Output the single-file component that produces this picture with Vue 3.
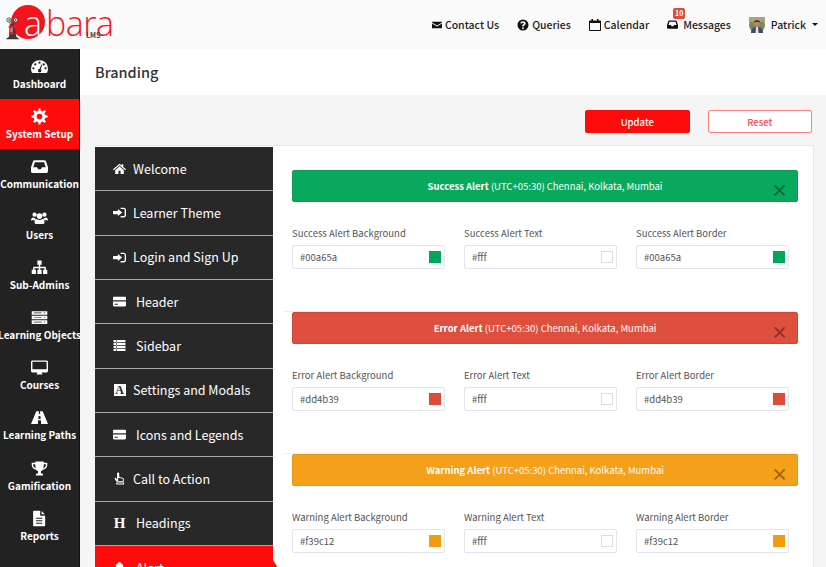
<script setup>
import { ref } from 'vue'

const gear = (() => {
  let d = ''
  const teeth = 8
  for (let i = 0; i < teeth; i++) {
    const a = (i / teeth) * Math.PI * 2
    const pts = [[-0.2, 8.4], [-0.13, 11.5], [0.13, 11.5], [0.2, 8.4]]
    pts.forEach((p, j) => {
      const x = 12 + p[1] * Math.cos(a + p[0])
      const y = 12 + p[1] * Math.sin(a + p[0])
      d += (i === 0 && j === 0 ? 'M' : 'L') + x.toFixed(2) + ' ' + y.toFixed(2)
    })
  }
  return d + 'zM12 8a4 4 0 1 0 0 8a4 4 0 0 0 0-8z'
})()

const icons = {
  gauge: 'M12 3A12 12 0 0 0 0 15c0 2.2.6 4.2 1.7 6h20.6c1.100-1.800 1.700-3.800 1.700-6A12 12 0 0 0 12 3zM12 5a1.600 1.600 0 1 1 0 3.200a1.600 1.600 0 0 1 0-3.200zM6 7.500a1.600 1.600 0 1 1 0 3.200a1.600 1.600 0 0 1 0-3.200zM18 7.500a1.600 1.600 0 1 1 0 3.200a1.600 1.600 0 0 1 0-3.200zM3.500 13a1.600 1.600 0 1 1 0 3.200a1.600 1.600 0 0 1 0-3.200zM20.500 13a1.600 1.600 0 1 1 0 3.200a1.600 1.600 0 0 1 0-3.200zM14.500 9l1.300.4l-2 6.400a2.500 2.500 0 1 1-1.500-.5z',
  gear,
  inbox: 'M5 3h14c1 0 1.700.5 2 1.400L24 13v6c0 1.200-.9 2-2 2H2c-1.100 0-2-.8-2-2v-6L3 4.400C3.300 3.500 4 3 5 3zM5.500 6L3.200 13h5.300l1.500 3h4l1.500-3h5.300L18.500 6z',
  users: 'M5 5a3 3 0 1 1 0 6a3 3 0 0 1 0-6zM19 5a3 3 0 1 1 0 6a3 3 0 0 1 0-6zM12 6a4 4 0 1 1 0 8a4 4 0 0 1 0-8zM0 17c0-3 1-5 3-5c.8.800 2.200 1.200 3.500.800c-.5 1-.8 2.200-.8 3.200H2c-1 0-2 .2-2 1zM24 17c0-3-1-5-3-5c-.8.800-2.200 1.200-3.500.800c.5 1 .8 2.200.8 3.200H22c1 0 2 .2 2 1zM7 21c-1.300 0-2-.8-2-2c0-3 1-5 3-5c1 1 2.500 1.500 4 1.500s3-.5 4-1.500c2 0 3 2 3 5c0 1.200-.7 2-2 2z',
  sitemap: 'M9 2h6v6h-2v3h7c.6 0 1 .4 1 1v3h2v6h-6v-6h2v-2h-6v2h2v6H9v-6h2v-2H5v2h2v6H1v-6h2v-3c0-.6.4-1 1-1h7V8H9z',
  server: 'M1 3h22v5H1zM1 9.500h22v5H1zM1 16h22v5H1zM4 5v1h11V5zM4 11.500v1h11v-1zM4 18v1h11v-1zM18 5v1h2V5zM18 11.500v1h2v-1zM18 18v1h2v-1z',
  desktop: 'M2 2h20c1.100 0 2 .9 2 2v13c0 1.100-.9 2-2 2h-7c0 1 .5 1.500 1 2v1H8v-1c.5-.5 1-1 1-2H2c-1.100 0-2-.9-2-2V4c0-1.100.9-2 2-2zM2 4v10.500h20V4z',
  road: 'M7.500 3h3.800l-.3 4h2l-.3-4h3.800L24 21h-9.700l-.3-5h-4l-.3 5H0zM10.700 10l-.3 4h3.200l-.3-4z',
  trophy: 'M6 2h12v2h5v3c0 3.500-3 6.500-6.300 6.800c-.8 1-1.700 1.700-2.700 2.200v2c0 1 1 1.500 3 1.500V22H7v-2.500c2 0 3-.5 3-1.500v-2c-1-.5-1.900-1.200-2.700-2.200C4 13.500 1 10.500 1 7V4h5zM3 6v1c0 2 1.500 3.800 3.700 4.500C6.200 10 6 8 6 6zM21 6h-3c0 2-.2 4-.7 5.500C19.500 10.800 21 9 21 7z',
  file: 'M4 1h9v7h7v14c0 .6-.4 1-1 1H4c-.6 0-1-.4-1-1V2c0-.6.4-1 1-1zM15 1.500L19.500 6H15zM7 11v1.500h9V11zM7 14.500V16h9v-1.500zM7 18v1.500h9V18z',
  home: 'M12 3l4 3.500V4h3v5.200L24 13.500l-1.400 1.600L12 6L1.400 15.100L0 13.500zM12 8l8 7v7h-6v-6h-4v6H4v-7z',
  signin: 'M14 3h6c2 0 4 2 4 4v10c0 2-2 4-4 4h-6v-2.500h6c.8 0 1.500-.7 1.500-1.500V7c0-.8-.7-1.500-1.500-1.500h-6zM9 5.500l8 6.500l-8 6.500V15H1c-.6 0-1-.4-1-1v-4c0-.6.4-1 1-1h8z',
  card: 'M2 3h20c1.100 0 2 .9 2 2v14c0 1.100-.9 2-2 2H2c-1.100 0-2-.9-2-2V5c0-1.100.9-2 2-2zM0 9.500V12h24V9.500zM3 16v2h6v-2z',
  list: 'M1 2h22v4H1zM1 7.500h22v4H1zM1 13h22v4H1zM1 18.500h22v3.500H1zM5.500 2v20h1.200V2z',
  hand: 'M9.500 1c1.200 0 2 .9 2 2v6l6 1.500c1.500.4 2.500 1.500 2.500 3V18H6.500L3 12.500c-.7-1 .8-2.800 2-1.500l2.500 2.500V3c0-1.100.8-2 2-2zM9.500 3v13.500h8.700v-3c0-.7-.5-1.200-1.200-1.400L9.500 10.500zM6 19.500h14.500V23H6zM8 20.800v1h10.500v-1z',
  bell: 'M12 0c1.500 0 2.500 1 2.500 2.500C17.500 3.500 19 6 19 9c0 5 2 7 3 8v2H2v-2c1-1 3-3 3-8c0-3 1.500-5.500 4.500-6.500C9.500 1 10.500 0 12 0z',
  envelope: 'M1 4h22c.6 0 1 .4 1 1v1L12 13L0 6V5c0-.6.4-1 1-1zM0 8.500l12 7l12-7V19c0 .6-.4 1-1 1H1c-.6 0-1-.4-1-1z',
  question: 'M12 1a11 11 0 1 1 0 22a11 11 0 0 1 0-22zM10.300 17v3h3.400v-3zM12 4.500c-3 0-4.800 1.500-5.300 3.800l3 .8c.3-1 1-1.600 2.100-1.600c1 0 1.800.5 1.800 1.400c0 .8-.5 1.200-1.500 1.900c-1.300.9-1.800 1.800-1.800 3.200v1h3.400v-.7c0-.6.300-1 1.300-1.700c1.500-1 2.300-2.100 2.300-3.800c0-2.600-2.500-4.300-5.300-4.300z',
  calendar: 'M5 0h3v3h8V0h3v3h3c1.100 0 2 .9 2 2v17c0 1.100-.9 2-2 2H2c-1.100 0-2-.9-2-2V5c0-1.100.9-2 2-2h3zM2 8v14h20V8z'
}

const topLinks = [
  { label: 'Contact Us', icon: 'envelope', size: 10 },
  { label: 'Queries', icon: 'question', size: 12 },
  { label: 'Calendar', icon: 'calendar', size: 12 }
]

const sideItems = [
  { label: 'Dashboard', icon: 'gauge' },
  { label: 'System Setup', icon: 'gear', active: true },
  { label: 'Communication', icon: 'inbox' },
  { label: 'Users', icon: 'users' },
  { label: 'Sub-Admins', icon: 'sitemap' },
  { label: 'Learning Objects', icon: 'server' },
  { label: 'Courses', icon: 'desktop' },
  { label: 'Learning Paths', icon: 'road' },
  { label: 'Gamification', icon: 'trophy' },
  { label: 'Reports', icon: 'file' }
]

const menuItems = [
  { label: 'Welcome', icon: 'home' },
  { label: 'Learner Theme', icon: 'signin' },
  { label: 'Login and Sign Up', icon: 'signin' },
  { label: 'Header', icon: 'card', wide: true },
  { label: 'Sidebar', icon: 'list', wide: true },
  { label: 'Settings and Modals', letter: 'A' },
  { label: 'Icons and Legends', icon: 'card', wide: true },
  { label: 'Call to Action', icon: 'hand' },
  { label: 'Headings', letter: 'H', wide: true },
  { label: 'Alert', icon: 'bell', wide: true, active: true }
]

const alerts = ref([
  { name: 'Success', cls: 'success', bg: '#00a65a' },
  { name: 'Error', cls: 'error', bg: '#dd4b39' },
  { name: 'Warning', cls: 'warning', bg: '#f39c12' }
])
</script>

<template>
  <div class="page">
    <header class="topbar">
      <div class="logo">
        <span class="logo-disc"></span>
        <svg class="snail" viewBox="0 0 30 40">
          <path d="M8 11 6 5M13 11l3-6" stroke="#333" stroke-width="1.200" fill="none" />
          <circle cx="6" cy="5" r="3.200" fill="#fff" stroke="#333" stroke-width="1.200" />
          <circle cx="16" cy="5" r="3.200" fill="#fff" stroke="#333" stroke-width="1.200" />
          <circle cx="6" cy="5" r="1.200" fill="#222" />
          <circle cx="16" cy="5" r="1.200" fill="#222" />
          <path d="M7 12c1-2 6-2 7 0l3 18 5 4H1l5-4z" fill="#3a3a3a" />
          <path d="M6 14l9-1 1 3-5 1 2 9-5 1-1-10-2-1z" fill="#e9232b" />
          <path d="M8 19l4-1M8 22l4-1" stroke="#fff" stroke-width="1" />
        </svg>
        <span class="logo-a">a</span>
        <span class="logo-bara">bara</span>
        <span class="logo-lms">LMS</span>
      </div>
      <nav class="top-links">
        <a v-for="link in topLinks" :key="link.label" class="top-link">
          <svg :width="link.size" :height="link.size" viewBox="0 0 24 24"><path :d="icons[link.icon]" fill-rule="evenodd" /></svg>
          <span>{{ link.label }}</span>
        </a>
        <a class="top-link messages">
          <svg width="11" height="11" viewBox="0 0 24 24"><path :d="icons.inbox" fill-rule="evenodd" /></svg>
          <span>Messages</span>
          <b class="badge">10</b>
        </a>
        <a class="top-link user">
          <svg class="avatar" viewBox="0 0 16 16">
            <circle cx="8" cy="8" r="8" fill="#7d8a55" />
            <path d="M0 5h16V0H0z" fill="#a9a37a" />
            <circle cx="8" cy="6.500" r="3" fill="#b98562" />
            <path d="M5 5.500c0-3 6-3 6 0c-2-1-4-1-6 0z" fill="#2e2a28" />
            <path d="M2 16c0-4 2-6 6-6s6 2 6 6z" fill="#3d4a70" />
            <path d="M7 10h2l.5 6h-3z" fill="#e8e4e0" />
          </svg>
          <span class="user-name">Patrick</span>
          <i class="caret"></i>
        </a>
      </nav>
    </header>

    <div class="layout">
      <aside class="sidebar">
        <a v-for="item in sideItems" :key="item.label" class="side-item" :class="{ active: item.active }">
          <svg width="17" height="17" viewBox="0 0 24 24"><path :d="icons[item.icon]" fill-rule="evenodd" /></svg>
          <span>{{ item.label }}</span>
        </a>
      </aside>

      <main class="main">
        <div class="title-bar">Branding</div>
        <div class="content">
          <div class="actions">
            <button class="btn btn-primary">Update</button>
            <button class="btn btn-outline">Reset</button>
          </div>
          <section class="panel">
            <ul class="menu">
              <li v-for="item in menuItems" :key="item.label" class="menu-item" :class="{ active: item.active, wide: item.wide }">
                <span class="menu-icon">
                  <svg v-if="item.icon" width="13" height="13" viewBox="0 0 24 24"><path :d="icons[item.icon]" fill-rule="evenodd" /></svg>
                  <b v-else-if="item.letter === 'A'" class="letter-a">A</b>
                  <b v-else class="letter-h">H</b>
                </span>
                <span>{{ item.label }}</span>
              </li>
            </ul>
            <div class="settings">
              <div v-for="alert in alerts" :key="alert.cls" class="alert-group">
                <div class="alert-box" :class="alert.cls">
                  <span><b>{{ alert.name }} Alert</b> (UTC+05:30) Chennai, Kolkata, Mumbai</span>
                  <span class="close">×</span>
                </div>
                <div class="fields">
                  <div v-for="part in ['Background', 'Text', 'Border']" :key="part" class="field">
                    <label>{{ alert.name }} Alert {{ part }}</label>
                    <div class="input">
                      <span>{{ part === 'Text' ? '#fff' : alert.bg }}</span>
                      <i class="swatch" :class="{ blank: part === 'Text' }" :style="part === 'Text' ? {} : { background: alert.bg }"></i>
                    </div>
                  </div>
                </div>
              </div>
            </div>
          </section>
        </div>
      </main>
    </div>
  </div>
</template>

<style>
html, body {
  margin: 0;
  overflow: hidden;
}
</style>

<style scoped>
.page {
  width: 826px;
  height: 567px;
  overflow: hidden;
  font-family: "Noto Sans CJK SC", "Noto Sans", sans-serif;
  color: #333;
  background: #f5f5f5;
}

.topbar {
  height: 49px;
  display: flex;
  justify-content: space-between;
  background: #fafafa;
}

.logo {
  position: relative;
  width: 110px;
  height: 49px;
}

.logo-disc {
  position: absolute;
  left: 11px;
  top: 5px;
  width: 34px;
  height: 34px;
  border-radius: 50%;
  background: #f5141d;
}

.snail {
  position: absolute;
  left: 5px;
  top: 16px;
  width: 20px;
  height: 28px;
}

.logo-a,
.logo-bara {
  position: absolute;
  top: 3px;
  font-family: "Open Sans", sans-serif;
  font-size: 34px;
  line-height: 40px;
  font-weight: 300;
}

.logo-a {
  left: 24px;
  color: #fff;
}

.logo-bara {
  left: 46px;
  color: #f5141d;
  letter-spacing: -0.5px;
}

.logo-lms {
  position: absolute;
  left: 86px;
  top: 30px;
  font-size: 7px;
  line-height: 10px;
  font-weight: 700;
  color: #444;
}

.top-links {
  display: flex;
  align-items: center;
  padding-right: 8px;
}

.top-link {
  position: relative;
  display: flex;
  align-items: center;
  gap: 3px;
  margin-left: 18px;
  font-size: 10.500px;
  line-height: 14px;
  font-weight: 500;
  color: #222;
}

.top-link svg {
  fill: #111;
}

.messages {
  gap: 5px;
}

.badge {
  position: absolute;
  left: 6px;
  top: -10px;
  width: 12px;
  height: 11px;
  border-radius: 2px;
  background: #dd4b39;
  color: #fff;
  font-size: 7px;
  line-height: 11px;
  text-align: center;
}

.user {
  gap: 6px;
}

.avatar {
  width: 16px;
  height: 16px;
}

.caret {
  margin-left: 0;
  width: 0;
  height: 0;
  border-left: 3px solid transparent;
  border-right: 3px solid transparent;
  border-top: 3px solid #111;
}

.layout {
  display: flex;
  height: 518px;
}

.sidebar {
  flex: none;
  box-sizing: border-box;
  width: 80px;
  background: #222;
  border-right: 1px solid #111;
}

.side-item {
  display: flex;
  flex-direction: column;
  align-items: center;
  justify-content: center;
  height: 50.200px;
  gap: 2px;
  color: #fff;
  font-size: 10px;
  line-height: 13px;
  font-weight: 700;
  white-space: nowrap;
}

.side-item svg {
  fill: #fff;
}

.side-item.active {
  background: #fe0c0c;
}

.main {
  flex: 1;
  min-width: 0;
}

.title-bar {
  box-sizing: border-box;
  height: 46px;
  padding-left: 15px;
  background: #fff;
  font-size: 14.500px;
  line-height: 46px;
  font-weight: 500;
}

.content {
  padding: 15px 14px 0 15px;
}

.actions {
  display: flex;
  justify-content: flex-end;
  gap: 18px;
  margin-bottom: 12px;
}

.btn {
  box-sizing: border-box;
  width: 104.500px;
  height: 23px;
  padding: 0;
  border-radius: 2px;
  font-family: inherit;
  font-size: 9.500px;
  font-weight: 500;
}

.btn-primary {
  border: 1px solid #fe0c0c;
  background: #fe0c0c;
  color: #fff;
}

.btn-outline {
  border: 1px solid #ff8080;
  background: #fff;
  color: #ff4d4d;
}

.panel {
  display: flex;
  align-items: flex-start;
  box-sizing: border-box;
  width: 719px;
  margin-right: -1px;
  border: 1px solid #e8e8e8;
  border-left: 0;
  background: #fff;
}

.menu {
  flex: none;
  width: 178px;
  margin: 1px 0 0;
  padding: 0;
  list-style: none;
  background: #282828;
  color: #fff;
}

.menu-item {
  position: relative;
  box-sizing: border-box;
  display: flex;
  align-items: center;
  height: 44.330px;
  padding-left: 18px;
  border-bottom: 1px solid #a8a8a8;
  font-size: 12.500px;
  line-height: 16px;
}

.menu-item .menu-icon {
  display: flex;
  justify-content: center;
  width: 13px;
  margin-right: 7px;
}

.menu-item.wide .menu-icon {
  margin-right: 10px;
}

.menu-icon svg {
  fill: #fff;
}

.letter-a {
  display: block;
  width: 12px;
  height: 12px;
  background: #fff;
  color: #282828;
  font-family: "Liberation Serif", serif;
  font-size: 12px;
  line-height: 12px;
  text-align: center;
}

.letter-h {
  font-family: "Liberation Serif", serif;
  font-size: 15px;
  line-height: 14px;
}

.menu-item.active {
  background: #fe0c0c;
  border-bottom: 0;
}

.menu-item.active::after {
  content: '';
  position: absolute;
  right: -5px;
  top: 14px;
  border-left: 5px solid #fe0c0c;
  border-top: 8px solid transparent;
  border-bottom: 8px solid transparent;
}

.settings {
  flex: 1;
  min-width: 0;
  padding: 24px 15px 0 19px;
}

.alert-group {
  height: 142px;
  box-sizing: border-box;
  margin-left: -9px;
  padding-left: 9px;
  border-bottom: 1px solid #f0f0f0;
}

.alert-box {
  position: relative;
  box-sizing: border-box;
  display: flex;
  align-items: center;
  justify-content: center;
  height: 32px;
  border-radius: 2px;
  color: #fff;
  font-size: 9.500px;
  line-height: 12px;
}

.alert-box.success {
  background: #08a85d;
  border: 1px solid #0d9c59;
}

.alert-box.error {
  background: #df4f3d;
  border: 1px solid #d04535;
}

.alert-box.warning {
  background: #f4a01b;
  border: 1px solid #e49615;
}

.close {
  position: absolute;
  right: 9px;
  top: 9px;
  font-size: 17px;
  line-height: 20px;
  font-weight: 700;
  color: rgba(0, 0, 0, 0.4);
}

.fields {
  display: grid;
  grid-template-columns: repeat(3, 153px);
  column-gap: 19px;
  margin-top: 24px;
}

.field label {
  display: block;
  margin-bottom: 5px;
  font-size: 9.500px;
  line-height: 14px;
  color: #555;
}

.input {
  box-sizing: border-box;
  display: flex;
  align-items: center;
  justify-content: space-between;
  height: 24px;
  padding: 0 3px 0 7px;
  border: 1px solid #e4e4ec;
  border-radius: 2px;
  background: #fff;
  font-size: 9.500px;
  color: #555;
}

.swatch {
  width: 12px;
  height: 12px;
}

.swatch.blank {
  box-sizing: border-box;
  border: 1px solid #ddd;
  background: #fff;
}
</style>
